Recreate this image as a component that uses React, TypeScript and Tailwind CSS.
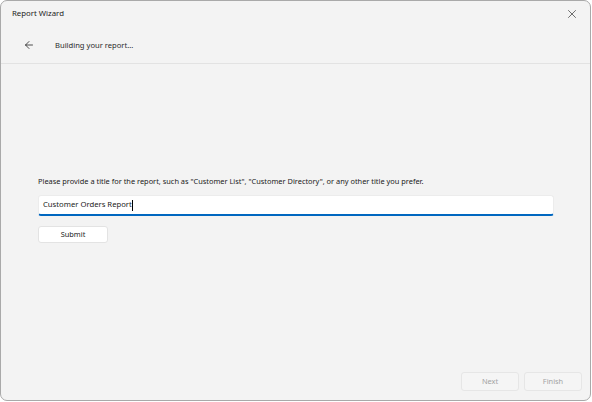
import { X, ArrowLeft } from 'lucide-react';

export default function App() {
  return (
    <div className="w-[592px] h-[402px] bg-white" style={{ fontFamily: '"Noto Sans", "Open Sans", sans-serif' }}>
      <div className="w-[591px] h-[401px] bg-[#f3f3f3] border border-[#a9a9a9] rounded-[7px] flex flex-col overflow-hidden">
        {/* title bar */}
        <div className="h-[25px] flex items-center justify-between pl-[11px] pr-[11px]">
          <span className="text-[7.8px] text-[#1b1b1b] mt-[1px]">Report Wizard</span>
          <X size={14} strokeWidth={1.2} className="text-[#333]" />
        </div>

        {/* header */}
        <div className="h-[38px] flex items-center pl-[22px] border-b border-[#e2e2e2]">
          <ArrowLeft size={12} strokeWidth={1.6} className="text-[#222]" />
          <span className="ml-[20px] text-[7.6px] text-[#2b2b2b] mt-[2px]">Building your report...</span>
        </div>

        {/* body */}
        <div className="flex-1 flex flex-col pl-[37px] pr-[37px] pt-[111px]">
          <p className="text-[7.4px] text-[#222] leading-[12px]">
            Please provide a title for the report, such as "Customer List", "Customer Directory", or any other title you prefer.
          </p>
          <div className="mt-[8px] w-[516px] h-[21px] bg-white rounded-[3px] border border-[#ececec] border-b-2 border-b-[#0067c0] flex items-center pl-[4px]">
            <span className="text-[7.7px] text-[#1b1b1b]">Customer Orders Report</span>
            <span className="w-px h-[11px] bg-black" />
          </div>
          <button className="mt-[10px] w-[70px] h-[17px] bg-white border border-[#e3e3e3] rounded-[3px] text-[7.4px] text-[#1b1b1b] flex items-center justify-center">
            Submit
          </button>
        </div>

        {/* footer */}
        <div className="flex justify-end gap-[5px] pr-[8px] pb-[9px]">
          <button className="w-[58px] h-[19px] bg-[#f5f5f5] border border-[#e6e6e6] rounded-[3px] text-[7.4px] text-[#a3a3a3]">Next</button>
          <button className="w-[58px] h-[19px] bg-[#f5f5f5] border border-[#e6e6e6] rounded-[3px] text-[7.4px] text-[#a3a3a3]">Finish</button>
        </div>
      </div>
    </div>
  );
}
